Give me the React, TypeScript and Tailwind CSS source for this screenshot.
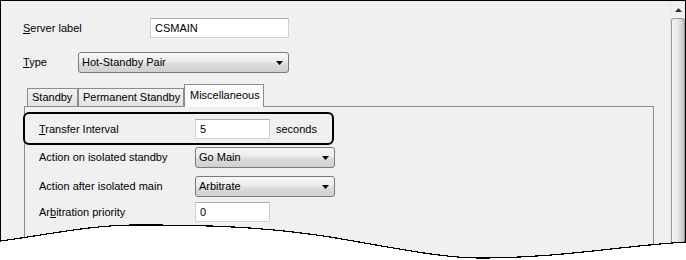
import React from "react";

function TextBox({ value, width }: { value: string; width: string }) {
  return (
    <div className={`flex h-[20px] items-center border border-[#cdd1d8] border-t-[#abadb3] bg-white pl-[4px] ${width}`}>
      {value}
    </div>
  );
}

function Combo({ value, width }: { value: string; width: string }) {
  return (
    <div
      className={`flex h-[21px] items-center justify-between rounded-[3px] border border-[#7a7a7a] bg-[linear-gradient(#f7f7f7,#ececec_45%,#dcdcdc_55%,#d0d0d0)] pl-[3px] pr-[5px] ${width}`}
    >
      <span>{value}</span>
      <svg width="7" height="4" viewBox="0 0 7 4">
        <path d="M0 0h7L3.5 4z" fill="#000" />
      </svg>
    </div>
  );
}

const tabs = [
  { name: "Standby", width: "w-[51px]" },
  { name: "Permanent Standby", width: "w-[106px]" },
];

export default function App() {
  return (
    <div className="relative h-[260px] w-[686px] overflow-hidden bg-white font-['Liberation_Sans',Arial,sans-serif] text-[11px] leading-none text-black">
      <div className="flex h-full border-x border-t border-black bg-[#f0f0f0]">
        <div className="flex flex-1 flex-col">
          {/* top fields */}
          <div className="ml-[22px] mt-[17px] flex items-center">
            <span className="w-[127px]">
              <u>S</u>erver label
            </span>
            <TextBox value="CSMAIN" width="w-[139px]" />
          </div>
          <div className="ml-[22px] mt-[14px] flex items-center">
            <span className="w-[55px]">
              <u>T</u>ype
            </span>
            <Combo value="Hot-Standby Pair" width="w-[211px]" />
          </div>

          {/* tab strip */}
          <div className="ml-[26px] mt-[11px] flex h-[22px] items-end">
            {tabs.map((t) => (
              <div
                key={t.name}
                className={`flex h-[18px] items-center border border-b-0 border-[#898c95] bg-[linear-gradient(#f2f2f2,#e3e3e3)] pl-[4px] ${t.width}`}
              >
                {t.name}
              </div>
            ))}
            <div className="relative z-10 -mb-px flex h-[23px] w-[80px] items-start border border-b-0 border-[#898c95] bg-[#fbfbfb] pl-[5px] pt-[5px]">
              Miscellaneous
            </div>
          </div>

          {/* tab panel */}
          <div className="ml-[23px] flex w-[630px] flex-1 flex-col border-x border-t border-[#898c95] pl-[14px]">
            <div className="mt-[12px] flex items-center">
              <span className="w-[156px]">
                <u>T</u>ransfer Interval
              </span>
              <TextBox value="5" width="w-[75px]" />
              <span className="ml-[6px]">seconds</span>
            </div>
            <div className="mt-[8px] flex items-center">
              <span className="w-[156px]">Action on isolated standby</span>
              <Combo value="Go Main" width="w-[140px]" />
            </div>
            <div className="mt-[8px] flex items-center">
              <span className="w-[156px]">Action after isolated main</span>
              <Combo value="Arbitrate" width="w-[140px]" />
            </div>
            <div className="mt-[5px] flex items-center">
              <span className="w-[156px]">
                Ar<u>b</u>itration priority
              </span>
              <TextBox value="0" width="w-[75px]" />
            </div>
            <div className="mt-[8px] flex items-center">
              <span className="w-[156px]">Isolated main timeout</span>
              <TextBox value="60" width="w-[75px]" />
              <span className="ml-[6px]">seconds</span>
            </div>
          </div>
        </div>

        {/* scrollbar */}
        <div className="flex w-[15px] flex-col border-l border-[#e4e4e4]">
          <div className="flex h-[17px] items-center justify-center">
            <svg width="7" height="4" viewBox="0 0 7 4">
              <path d="M3.5 0L7 4H0z" fill="#333" />
            </svg>
          </div>
          <div className="flex-1 rounded-t-[3px] border border-b-0 border-[#9a9a9a] bg-[linear-gradient(to_right,#f4f4f4,#e6e6e8_50%,#c2c2ca)]" />
        </div>
      </div>

      {/* highlight annotation */}
      <div className="pointer-events-none absolute left-[23px] top-[112px] h-[33px] w-[311px] rounded-[6px] border-2 border-black" />

      {/* torn bottom edge */}
      <svg className="pointer-events-none absolute inset-0" width="686" height="260" viewBox="0 0 686 260">
        <path
          d="M0 241 C40 236 90 225 135 225 C200 225 260 226 330 237 C390 247 440 258 480 258 C560 258 620 246 686 242 L686 260 L0 260 Z"
          fill="#fff"
        />
        <path
          d="M0 241 C40 236 90 225 135 225 C200 225 260 226 330 237 C390 247 440 258 480 258 C560 258 620 246 686 242"
          fill="none"
          stroke="#000"
          strokeWidth="1.2"
          shapeRendering="crispEdges"
        />
      </svg>
    </div>
  );
}
